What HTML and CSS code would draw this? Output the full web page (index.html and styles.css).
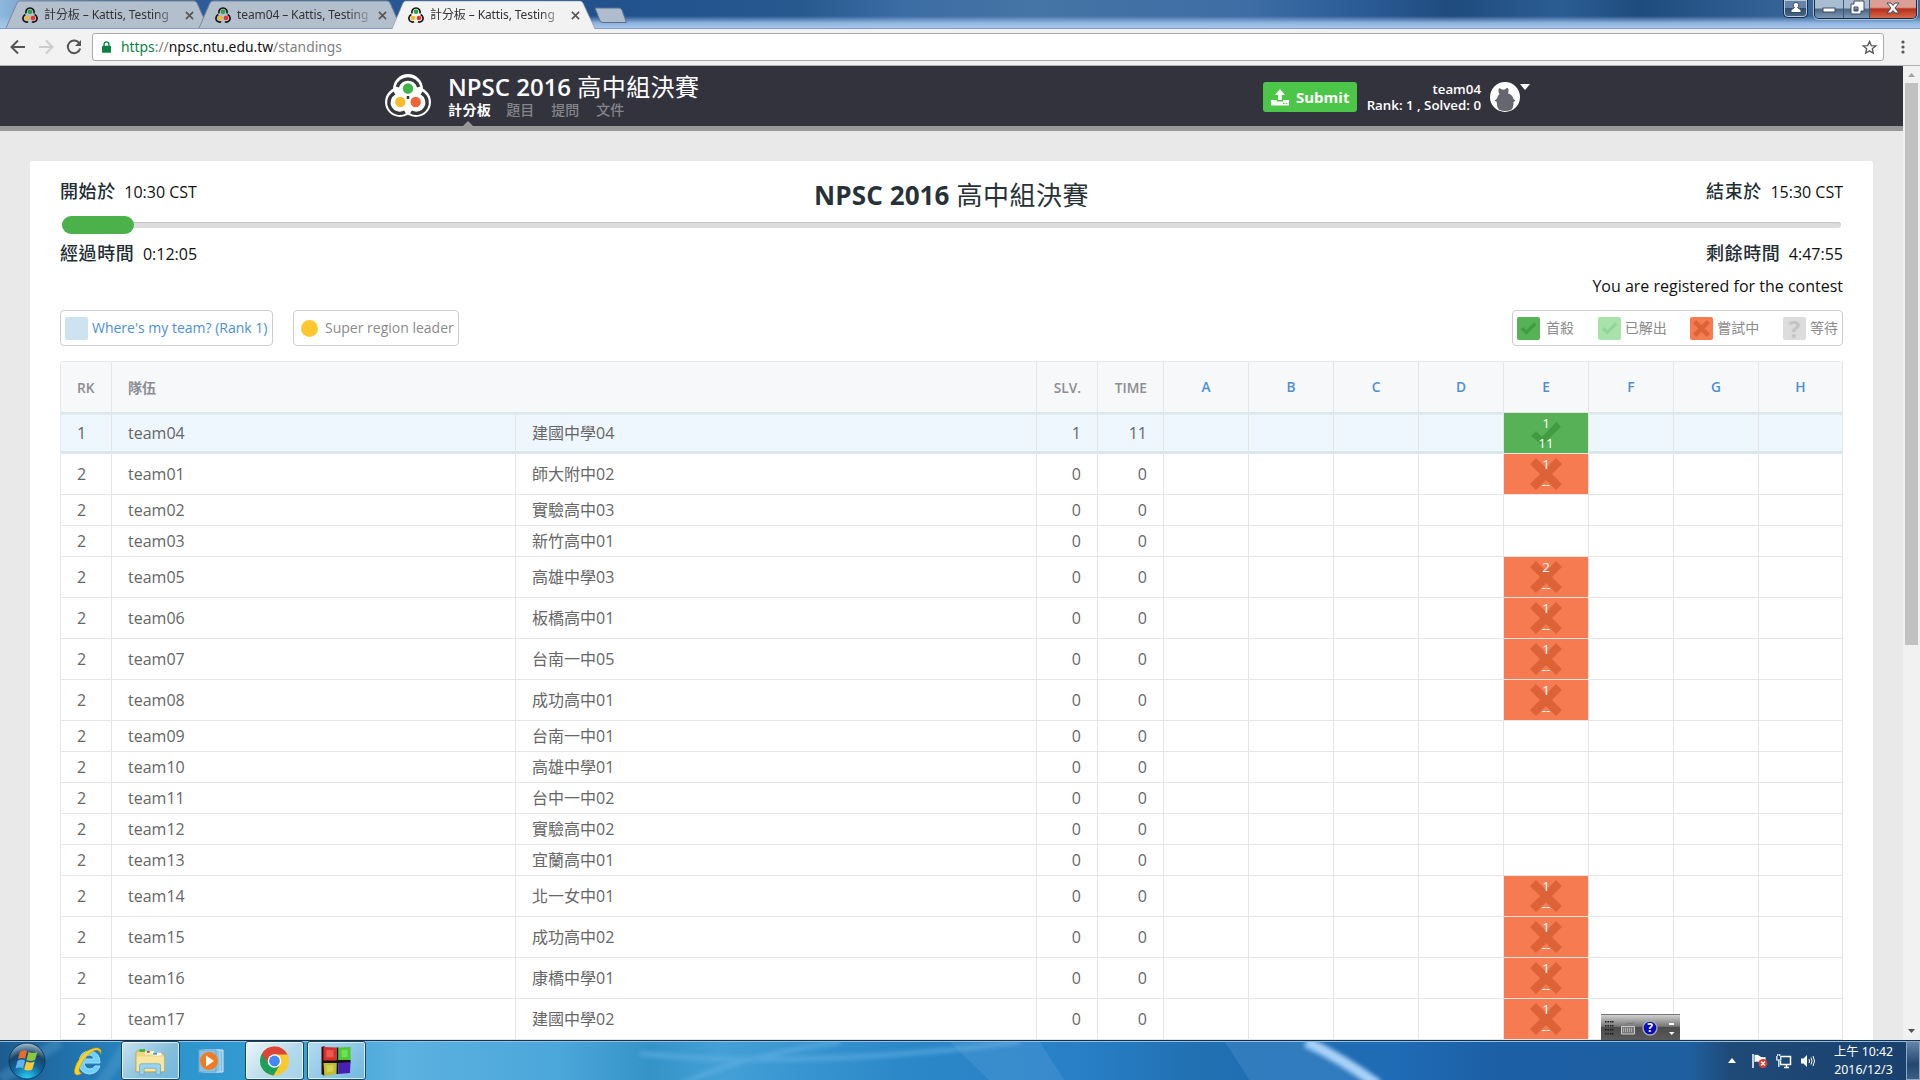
FILE: index.html
```html
<!DOCTYPE html>
<html lang="zh-Hant">
<head>
<meta charset="utf-8">
<title>計分板 – Kattis, Testing</title>
<link rel="stylesheet" href="styles.css">
</head>
<body>
<svg class="defs" width="0" height="0">
  <symbol id="kattis" viewBox="0 0 46 43">
    <g class="k-out"><circle cx="23" cy="15" r="15"/><circle cx="15" cy="28" r="15"/><circle cx="31" cy="28" r="15"/></g>
    <g class="k-arc" fill="none" stroke-width="3.4"><path d="M12.4 13A11 11 0 0 1 33.600 13"/><path d="M9.500 19A10.600 10.600 0 0 0 20 38"/><path d="M36.500 19A10.600 10.600 0 0 1 26 38"/><path d="M23 22v3" stroke-width="2.500"/></g>
    <circle cx="23" cy="14.500" r="5.200" fill="#3fb449"/><circle cx="15.300" cy="28" r="5.200" fill="#f7bb2b"/><circle cx="30.700" cy="28" r="5.200" fill="#ee6538"/>
  </symbol>
  <symbol id="fav" viewBox="0 0 16 16">
    <g fill="none" stroke="#151515" stroke-width="1.700"><path d="M4 6.500a4.200 4.200 0 1 1 8 0"/><path d="M3.300 7.500C.5 9 .2 12.500 2.200 14.200c1 .8 2.500 1 4 .6"/><path d="M12.700 7.500c2.800 1.500 3.100 5 1.100 6.700-1 .8-2.500 1-4 .6"/></g>
    <circle cx="8" cy="4.800" r="2.300" fill="#27a83b"/><circle cx="5" cy="11" r="2.300" fill="#f7b928"/><circle cx="11" cy="11" r="2.300" fill="#e33"/>
  </symbol>
  <symbol id="tick" viewBox="0 0 32 24"><path d="M1 15l5-5 6 6L26.500 1 31 6 12 24z"/></symbol>
  <symbol id="cross" viewBox="0 0 32 32"><path d="M6 0l10 10L26 0l6 6-10 10 10 10-6 6-10-10L6 32l-6-6 10-10L0 6z"/></symbol>
</svg>

<div class="tabstrip">
  <div class="tab">
    <svg class="tab-bg" viewBox="0 0 203 28"><path d="M0 28L11 3Q12 1 14 1H188Q190 1 191 3L202 28"/></svg>
    <svg class="fav"><use href="#fav"/></svg><span class="tab-title">計分板 – Kattis, Testing</span><svg class="x" viewBox="0 0 10 10"><path d="M1 1l8 8M9 1l-8 8"/></svg>
  </div>
  <div class="tab">
    <svg class="tab-bg" viewBox="0 0 203 28"><path d="M0 28L11 3Q12 1 14 1H188Q190 1 191 3L202 28"/></svg>
    <svg class="fav"><use href="#fav"/></svg><span class="tab-title">team04 – Kattis, Testing</span><svg class="x" viewBox="0 0 10 10"><path d="M1 1l8 8M9 1l-8 8"/></svg>
  </div>
  <div class="tab active">
    <svg class="tab-bg" viewBox="0 0 203 28"><path d="M0 29L11 3Q12 1 14 1H188Q190 1 191 3L203 29"/></svg>
    <svg class="fav"><use href="#fav"/></svg><span class="tab-title">計分板 – Kattis, Testing</span><svg class="x" viewBox="0 0 10 10"><path d="M1 1l8 8M9 1l-8 8"/></svg>
  </div>
  <svg class="newtab" viewBox="0 0 34 17"><path d="M1 1H25Q27 1 28 3L32.500 15.500H9Q7 15.500 6 14z"/></svg>
  <div class="winbtns">
    <div class="wb user"><svg viewBox="0 0 20 16"><path d="M10 2.500a2.700 2.700 0 0 1 1.500 5L15 10v2.500H5V10l3.500-2.500A2.700 2.700 0 0 1 10 2.500z"/></svg></div>
    <div class="wgroup">
      <div class="wb"><svg viewBox="0 0 20 16"><rect x="4" y="8" width="12" height="4"/></svg></div>
      <div class="wb"><svg viewBox="0 0 20 16"><path fill-rule="evenodd" d="M7 1h10v10h-3v3H4V4h3zM7 7v4h4V7z"/></svg></div>
      <div class="wb close"><svg viewBox="0 0 20 16"><path d="M4 3h4l2 2.500L12 3h4l-4 5 4 5h-4l-2-2.500L8 13H4l4-5z"/></svg></div>
    </div>
  </div>
</div>

<div class="toolbar">
  <svg class="nav" viewBox="0 0 16 16"><path d="M15 8H2M8 1.500L1.500 8 8 14.500"/></svg>
  <svg class="nav off" viewBox="0 0 16 16"><path d="M1 8h13M8 1.500L14.500 8 8 14.500"/></svg>
  <svg class="nav" viewBox="0 0 16 16"><path d="M13.500 4.500A6.300 6.300 0 1 0 14.200 9.500"/><path d="M15 1v6H9z" class="solid"/></svg>
  <div class="omni">
    <svg class="lock" viewBox="0 0 10 13"><path d="M1 5h8q1 0 1 1v6q0 1-1 1H1q-1 0-1-1V6q0-1 1-1z"/><path d="M2.300 6V3.300a2.700 2.500 0 0 1 5.400 0V6" fill="none" stroke="#0b8043" stroke-width="1.500"/></svg>
    <span class="url"><span class="sec">https</span><span class="dim">://</span>npsc.ntu.edu.tw<span class="dim">/standings</span></span>
    <svg class="star" viewBox="0 0 16 16"><path d="M8 1.500l1.900 4.400 4.700.4-3.600 3.100 1.100 4.700L8 11.600l-4.100 2.500L5 9.400 1.400 6.300l4.700-.4z"/></svg>
  </div>
  <svg class="dots" viewBox="0 0 4 14"><circle cx="2" cy="2" r="1.600"/><circle cx="2" cy="7" r="1.600"/><circle cx="2" cy="12" r="1.600"/></svg>
</div>

<div class="viewport">
  <div class="page">
    <header class="head">
      <svg class="logo"><use href="#kattis"/></svg>
      <div class="brand">
        <div class="contest">NPSC 2016 <span class="zh">高中組決賽</span></div>
        <nav class="menu"><a class="on">計分板</a><a>題目</a><a>提問</a><a>文件</a></nav>
      </div>
      <div class="submit"><svg viewBox="0 0 18 17"><path d="M9 0l5 6h-3.200v5H7.200V6H4z"/><path fill-rule="evenodd" d="M0 11h5.800v1.500h6.400V11H18v5.500H0zM12 14v1h1.500v-1zM14.800 14v1h1.500v-1z"/></svg>Submit</div>
      <div class="who"><div>team04</div><div>Rank: 1 , Solved: 0</div></div>
      <svg class="avatar" viewBox="0 0 30 30"><circle cx="15" cy="15" r="15" fill="#fff"/><path fill="#66666f" d="M8.500 7.500Q9 5.500 11 7Q13.500 8.500 15.500 7Q18 5 18.500 7.500Q18.800 10 18 11.500Q22 12 23.500 17L25.500 18.500 23.500 20Q24 25 21 28Q15 30 9.500 28Q6.500 25 6.800 20L4.800 18.500 7 16.500Q7.500 13.500 9.500 12Q8 10 8.500 7.500z"/></svg>
      <svg class="caret" viewBox="0 0 10 6"><path d="M0 0h10L5 6z"/></svg>
    </header>

    <main class="card">
      <section class="clock">
        <div class="line"><span><b>開始於</b>10:30 CST</span><h1>NPSC 2016 <span class="zh">高中組決賽</span></h1><span class="r"><b>結束於</b>15:30 CST</span></div>
        <div class="track"><div class="fill"></div></div>
        <div class="line second"><span><b>經過時間</b>0:12:05</span><span class="r"><b>剩餘時間</b>4:47:55</span></div>
        <div class="reg">You are registered for the contest</div>
      </section>
      <section class="legends">
        <div class="legend mine"><i class="sw"></i>Where's my team? (Rank 1)</div>
        <div class="legend lead"><i class="dot"></i>Super region leader</div>
        <div class="legend states">
          <span><i class="sw first"><svg><use href="#tick"/></svg></i>首殺</span>
          <span><i class="sw solved"><svg><use href="#tick"/></svg></i>已解出</span>
          <span><i class="sw tried"><svg><use href="#cross"/></svg></i>嘗試中</span>
          <span><i class="sw wait">?</i>等待</span>
        </div>
      </section>
      <table class="board">
        <colgroup><col class="c-rk"><col class="c-team"><col class="c-name"><col class="c-slv"><col class="c-time"><col class="c-p"><col class="c-p"><col class="c-p"><col class="c-p"><col class="c-p"><col class="c-p"><col class="c-p"><col class="c-last"></colgroup>
        <thead><tr><th>RK</th><th colspan="2" class="zt">隊伍</th><th class="n">SLV.</th><th class="n">TIME</th><th class="p">A</th><th class="p">B</th><th class="p">C</th><th class="p">D</th><th class="p">E</th><th class="p">F</th><th class="p">G</th><th class="p">H</th></tr></thead>
        <tbody>
          <tr class="tall me"><td>1</td><td>team04</td><td>建國中學04</td><td class="n">1</td><td class="n">11</td><td></td><td></td><td></td><td></td><td class="ok"><div class="res"><svg><use href="#tick"/></svg><span>1</span><span>11</span></div></td><td></td><td></td><td></td></tr>
          <tr class="tall"><td>2</td><td>team01</td><td>師大附中02</td><td class="n">0</td><td class="n">0</td><td></td><td></td><td></td><td></td><td class="bad"><div class="res"><svg><use href="#cross"/></svg><span>1</span><span>--</span></div></td><td></td><td></td><td></td></tr>
          <tr><td>2</td><td>team02</td><td>實驗高中03</td><td class="n">0</td><td class="n">0</td><td></td><td></td><td></td><td></td><td></td><td></td><td></td><td></td></tr>
          <tr><td>2</td><td>team03</td><td>新竹高中01</td><td class="n">0</td><td class="n">0</td><td></td><td></td><td></td><td></td><td></td><td></td><td></td><td></td></tr>
          <tr class="tall"><td>2</td><td>team05</td><td>高雄中學03</td><td class="n">0</td><td class="n">0</td><td></td><td></td><td></td><td></td><td class="bad"><div class="res"><svg><use href="#cross"/></svg><span>2</span><span>--</span></div></td><td></td><td></td><td></td></tr>
          <tr class="tall"><td>2</td><td>team06</td><td>板橋高中01</td><td class="n">0</td><td class="n">0</td><td></td><td></td><td></td><td></td><td class="bad"><div class="res"><svg><use href="#cross"/></svg><span>1</span><span>--</span></div></td><td></td><td></td><td></td></tr>
          <tr class="tall"><td>2</td><td>team07</td><td>台南一中05</td><td class="n">0</td><td class="n">0</td><td></td><td></td><td></td><td></td><td class="bad"><div class="res"><svg><use href="#cross"/></svg><span>1</span><span>--</span></div></td><td></td><td></td><td></td></tr>
          <tr class="tall"><td>2</td><td>team08</td><td>成功高中01</td><td class="n">0</td><td class="n">0</td><td></td><td></td><td></td><td></td><td class="bad"><div class="res"><svg><use href="#cross"/></svg><span>1</span><span>--</span></div></td><td></td><td></td><td></td></tr>
          <tr><td>2</td><td>team09</td><td>台南一中01</td><td class="n">0</td><td class="n">0</td><td></td><td></td><td></td><td></td><td></td><td></td><td></td><td></td></tr>
          <tr><td>2</td><td>team10</td><td>高雄中學01</td><td class="n">0</td><td class="n">0</td><td></td><td></td><td></td><td></td><td></td><td></td><td></td><td></td></tr>
          <tr><td>2</td><td>team11</td><td>台中一中02</td><td class="n">0</td><td class="n">0</td><td></td><td></td><td></td><td></td><td></td><td></td><td></td><td></td></tr>
          <tr><td>2</td><td>team12</td><td>實驗高中02</td><td class="n">0</td><td class="n">0</td><td></td><td></td><td></td><td></td><td></td><td></td><td></td><td></td></tr>
          <tr><td>2</td><td>team13</td><td>宜蘭高中01</td><td class="n">0</td><td class="n">0</td><td></td><td></td><td></td><td></td><td></td><td></td><td></td><td></td></tr>
          <tr class="tall"><td>2</td><td>team14</td><td>北一女中01</td><td class="n">0</td><td class="n">0</td><td></td><td></td><td></td><td></td><td class="bad"><div class="res"><svg><use href="#cross"/></svg><span>1</span><span>--</span></div></td><td></td><td></td><td></td></tr>
          <tr class="tall"><td>2</td><td>team15</td><td>成功高中02</td><td class="n">0</td><td class="n">0</td><td></td><td></td><td></td><td></td><td class="bad"><div class="res"><svg><use href="#cross"/></svg><span>1</span><span>--</span></div></td><td></td><td></td><td></td></tr>
          <tr class="tall"><td>2</td><td>team16</td><td>康橋中學01</td><td class="n">0</td><td class="n">0</td><td></td><td></td><td></td><td></td><td class="bad"><div class="res"><svg><use href="#cross"/></svg><span>1</span><span>--</span></div></td><td></td><td></td><td></td></tr>
          <tr class="tall"><td>2</td><td>team17</td><td>建國中學02</td><td class="n">0</td><td class="n">0</td><td></td><td></td><td></td><td></td><td class="bad"><div class="res"><svg><use href="#cross"/></svg><span>1</span><span>--</span></div></td><td></td><td></td><td></td></tr>
        </tbody>
      </table>
    </main>
  </div>
  <div class="scroll">
    <svg viewBox="0 0 17 17"><path d="M5 11h7L8.500 7z" fill="#a3a3a3"/></svg>
    <div class="thumb"></div>
    <svg class="down" viewBox="0 0 17 17"><path d="M5 6h7l-3.500 4z" fill="#505050"/></svg>
  </div>
  <div class="ime">
    <svg viewBox="0 0 79 26">
      <g fill="#1c1c1c"><path d="M4 6h1.500v1.500H4zM6.500 6H8v1.500H6.500zM9 6h1.500v1.500H9zM11 6h1.500v1.500H11zM4 10h1.500v1.500H4zM6.500 10H8v1.500H6.500zM9 10h1.500v1.500H9zM11 10h1.500v1.500H11zM4 14h1.500v1.500H4zM6.500 14H8v1.500H6.500zM9 14h1.500v1.500H9zM11 14h1.500v1.500H11zM4 18h1.500v1.500H4zM6.500 18H8v1.500H6.500zM9 18h1.500v1.500H9zM11 18h1.500v1.500H11z"/></g>
      <path d="M20.500 11.500h13v7.500h-13z" fill="#777" stroke="#ccc"/><path d="M22 14h10M22 16h10" stroke="#ddd" stroke-dasharray="1 1"/><path d="M24 11q1-3 5-2.500T33 7" fill="none" stroke="#777"/>
      <circle cx="49" cy="13" r="7" fill="#0a0ac0" stroke="#aaa" stroke-width="1.400"/>
      <path d="M68 8h5v2h-5zM68 17h5.500L70.700 20z" fill="#fff"/>
    </svg><span class="q">?</span>
  </div>
</div>

<div class="taskbar">
  <svg class="streaks" viewBox="0 0 1920 40" preserveAspectRatio="none"><defs><filter id="soft"><feGaussianBlur stdDeviation="2"/></filter></defs><g fill="none" filter="url(#soft)"><path d="M1306 0Q1340 16 1378 44" stroke="#a9d1f8" stroke-width="11"/><path d="M680 44Q740 14 840 0M640 12Q800 28 1020 0" stroke="#62b3e4" stroke-width="5" opacity=".6"/><path d="M0 38L60 0M100 44L130 0" stroke="#5aa3d2" stroke-width="12" opacity=".35"/></g><path d="M950 0h90l25 40H990zM1225 0h80l60 40H1250z" fill="#7ab4e6" opacity=".2"/></svg>
  <div class="start"><svg viewBox="0 0 38 38"><defs><radialGradient id="orb" cx=".5" cy="1" r="1"><stop offset="0" stop-color="#29d5fb"/><stop offset=".45" stop-color="#10639a"/><stop offset=".7" stop-color="#174467"/><stop offset="1" stop-color="#aac1d1"/></radialGradient></defs><circle cx="19" cy="19" r="18" fill="url(#orb)" stroke="#0c3b5e"/><path d="M12 10q4-3 7-1l-2 8q-3-2-7 0z" fill="#ee6a2c"/><path d="M20.500 10q4 2 9 0l-2.500 8q-4 2-8.500 0z" fill="#8cc63e"/><path d="M9.500 19q4-2.500 7.500-.5l-2 8q-3.500-2-7.500 0z" fill="#5fb5ea"/><path d="M18.200 19.500q4 2 8.500 0l-2.500 8q-4 2-8 0z" fill="#fcc735"/></svg></div>
  <svg class="ie" viewBox="0 0 32 32"><path d="M27 18H11q1 6 6 6 3.500 0 5-3h5Q24 29 16 29 6 28 6 17 7 6 17 6q10 1 10 12zM11.500 14H21q-.5-4-4.500-4t-5 4z" fill="#6fd0fb" stroke="#9fe0fc" stroke-width="1"/><path d="M28 9q1-7-6-6Q11 5 4 18-1 29 4 30q2 0 5-2-4 .5-2.500-5Q10 12 20 6q6-3 8 3z" fill="#fbd31e" stroke="#d79b12" stroke-width=".5"/></svg>
  <div class="tb"><svg viewBox="0 0 34 30"><path d="M2 4h10l2 3h18v20H1V6z" fill="#efd684" stroke="#b8983c" stroke-width=".8"/><path d="M5 2h6v3H5z" fill="#3eb23c"/><path d="M11 4h10v4H11z" fill="#fff7c8"/><path d="M13 4h3v2h-3z" fill="#d33"/><path d="M20 6h9v3h-9z" fill="#fff"/><path d="M20 6h4v2h-4z" fill="#2b8de0"/><path d="M2 10h30v16H2z" fill="#f6e6a0"/><path d="M5 30V20q0-2 2-2h19q2 0 2 2v10h-5v-7H10v7z" fill="#9bd3ef" stroke="#5b9fc4" stroke-width=".7"/></svg></div>
  <svg class="media" viewBox="0 0 28 26"><path d="M7 2h18v22H7z" fill="#83bfe2" stroke="#d6ecf8"/><path d="M4 2h18v22H4z" fill="#86c4e8" stroke="#b9def2"/><path d="M1 2h17v22H1z" fill="#8cc0e2" stroke="#6aa9d2"/><circle cx="11" cy="13" r="9" fill="#f47a20"/><path d="M8 7.500l8 5.500-8 5.500z" fill="#fff"/></svg>
  <div class="tb bright"><svg viewBox="0 0 30 30"><circle cx="15" cy="15" r="14.500" fill="#fbc92e"/><path d="M15 15L2.400 7.800A14.500 14.500 0 0 0 14 29.400L21 18z" fill="#1da05a"/><path d="M2.400 7.800A14.500 14.500 0 0 1 28 8.500H15L9 18z" fill="#dc4437"/><circle cx="15" cy="15" r="6.800" fill="#fff"/><circle cx="15" cy="15" r="5.400" fill="#4688f1"/></svg></div>
  <div class="tb last"><svg viewBox="0 0 30 30"><path d="M0 1l3-1v30l-3-2z" fill="#2a1010"/><path d="M15 1.500h2V28h-2zM2 14h27v3H2z" fill="#111"/><path d="M2 1l13 .5v13H2z" fill="#d8302b"/><path d="M5 4l7 .3v7H5z" fill="#ea5a50"/><path d="M17 1.500L29 1v13H17z" fill="#4fc834"/><path d="M20 4l6-.3v7.500h-6z" fill="#72e055"/><path d="M2 17h13l-.5 11L3 30z" fill="#c1bd2f"/><path d="M5 19h7l-.5 6.500-6 1z" fill="#d3d054"/><path d="M17 17l12-1-.5 11-11.500 1z" fill="#4a20b4"/></svg></div>
  <div class="tray">
    <svg class="up" viewBox="0 0 8 5"><path d="M0 5h8L4 0z" fill="#fff"/></svg>
    <svg class="t1" viewBox="0 0 16 16"><path d="M1 1v14" stroke="#fff" stroke-width="1.500"/><path d="M2.500 2q3-1 5 1t6 1v6q-4 1-6-.5T2.500 9z" fill="#fff"/><circle cx="11" cy="10.500" r="4.500" fill="#e03a2c"/><path d="M9 8.500l4 4M13 8.500l-4 4" stroke="#fff" stroke-width="1.400"/></svg>
    <svg class="t2" viewBox="0 0 16 16"><path d="M5 3.500h9.500v8H4.500V8M8 14.500h5M10.500 12v2" fill="none" stroke="#fff" stroke-width="1.500"/><path d="M.8 3v4h4V3M1.800 1v2M3.800 1v2M2.800 7v7" fill="none" stroke="#fff" stroke-width="1.200"/></svg>
    <svg class="t3" viewBox="0 0 16 16"><path d="M1 5.500h2.500L7 2v12l-3.500-3.500H1z" fill="#fff"/><path d="M9 6q1 2 0 4M11 4.500q2 3.500 0 7M13 3q3 5 0 10" fill="none" stroke="#fff"/></svg>
    <div class="time"><div>上午 10:42</div><div>2016/12/3</div></div>
    <div class="peek"></div>
  </div>
</div>
</body>
</html>
```
FILE: styles.css
```css
* { box-sizing: border-box; }
html, body { margin: 0; height: 100%; }
body { width: 1920px; height: 1080px; overflow: hidden; display: flex; flex-direction: column; font-family: "Open Sans", "Noto Sans CJK TC", sans-serif; font-size: 16px; }
svg { display: block; flex: none; }
.defs { position: absolute; }

/* browser chrome */
.tabstrip { height: 29px; flex: none; display: flex; padding-left: 6px; position: relative; border-bottom: 1px solid #7f9ccb;
  background: linear-gradient(180deg, transparent 16px, rgba(160,195,235,.85) 23px, #a8c6ec 28px), linear-gradient(90deg, #8fb8dd 0, #2f609b 110px, #22518d 600px, #27598f 800px, #3b6ca3 900px, #4574a6 1030px, #3d6da4 1250px, #2a5a94 1370px, #1f4b7e 1450px, #2b5d93 1560px, #1f4c7f 1640px, #38659a 1800px, #3c6b9d 1920px); }
.tab { width: 203px; margin-right: -10px; height: 28px; position: relative; display: flex; align-items: center; padding-left: 16px; }
.tab-bg { position: absolute; left: 0; top: 0; width: 203px; height: 28px; overflow: visible; fill: #b3bfcd; stroke: #78889c; }
.tab.active { z-index: 2; }
.active .tab-bg { fill: #f2f2f2; stroke: #8494a8; }
.active .tab-bg path { stroke-width: .6; }
.fav { width: 16px; height: 16px; position: relative; top: 1px; }
.tab-title { position: relative; top: 1px; margin-left: 6px; width: 134px; height: 20px; font: 12px/20px "Noto Sans", "Noto Sans CJK TC", sans-serif; color: #333; white-space: nowrap; letter-spacing: -.1px; -webkit-mask-image: linear-gradient(90deg, #000 110px, rgba(0,0,0,.3) 130px); mask-image: linear-gradient(90deg, #000 110px, rgba(0,0,0,.3) 130px); }
.x { position: relative; top: 1px; width: 9px; height: 9px; margin-left: 7px; stroke: #555; stroke-width: 1.800; }
.newtab { position: relative; width: 34px; height: 17px; margin: 7px 0 0 9px; fill: #aebccd; stroke: #56708f; }
.winbtns { margin-left: auto; display: flex; gap: 6px; padding-right: 3px; }
.wb { height: 18px; width: 28px; display: flex; justify-content: center; background: linear-gradient(#a9bdd2 0 45%, #4b6684 50%, #7e9ab8); }
.wb svg { width: 20px; height: 16px; fill: #fff; stroke: #3c4a5c; stroke-width: 1; }
.user { width: 25px; border: 1px solid #1a2d44; border-top: 0; border-radius: 0 0 5px 5px; box-shadow: inset 0 0 0 1px #b7c8db; background: linear-gradient(#6484a8 0 45%, #2f506f 50%, #466785); }
.wgroup { display: flex; height: 19px; border: 1px solid #1a2d44; border-top: 0; border-radius: 0 0 5px 5px; overflow: hidden; box-shadow: 0 0 0 1px #a9bed5; }
.wgroup .wb + .wb { border-left: 1px solid #3e5775; width: 26px; }
.wgroup .wb + .wb.close { width: 47px; background: linear-gradient(#dba095 0 40%, #b62e18 50%, #d4684a); }

.toolbar { height: 37px; flex: none; background: #f2f2f2; border-bottom: 1px solid #b0b0b0; display: flex; align-items: center; padding: 0 15px 0 10px; }
.nav { width: 16px; height: 16px; margin-right: 12px; fill: none; stroke: #555; stroke-width: 2; }
.nav.off { stroke: #ccc; }
.nav .solid { fill: #555; stroke: none; }
.omni { flex: 1; height: 28px; margin: 0 17px 0 -2px; background: #fff; border: 1px solid #a8a8a8; border-radius: 3px; display: flex; align-items: center; padding: 0 6px 0 9px; }
.lock { width: 9px; height: 12px; fill: #0b8043; margin-right: 10px; }
.url { font: 13.850px/20px "Noto Sans", sans-serif; color: #111; margin-top: -1px; }
.sec { color: #0b8043; }
.dim { color: #808080; }
.star { width: 15px; height: 15px; margin-left: auto; fill: none; stroke: #555; stroke-width: 1.400; }
.dots { width: 4px; height: 14px; fill: #555; }

/* page */
.viewport { flex: none; height: 974px; display: flex; position: relative; overflow: hidden; }
.page { width: 1903px; background: #e9e9e9; height: 974px; overflow: hidden; }
.head { height: 65px; background: #33333d; border-bottom: 5px solid #999; display: flex; padding-left: 385px; color: #fff; }
.logo { width: 46px; height: 43px; margin-top: 8px; }
.k-out { fill: #fff; }
.k-arc { stroke: #33383c; }
.brand { margin-left: 17px; width: 815px; }
.contest { height: 32px; margin-top: 5px; font-size: 24px; line-height: 32px; font-weight: 600; white-space: nowrap; }
.zh { font-weight: 400; }
.contest .zh { letter-spacing: .4px; }
.menu { display: flex; height: 22px; margin-top: -4px; font-size: 14px; line-height: 22px; color: #85858b; }
.menu a { margin-right: 17px; position: relative; font-weight: 500; }
.menu .on { color: #fff; font-weight: 700; letter-spacing: .4px; margin-right: 15px; }
.menu .on::after { content: ""; position: absolute; left: 15px; top: 22px; border: 5px solid transparent; border-top: 0; border-bottom-color: #999; }
.submit { width: 94px; height: 30px; margin-top: 16px; border-radius: 3px; background: #4bc648; display: flex; align-items: center; padding-left: 8px; font-size: 15px; font-weight: 700; }
.submit svg { width: 18px; height: 17px; fill: #fff; margin-right: 7px; }
.who { width: 124px; text-align: right; margin-top: 15px; font-size: 13.300px; line-height: 16px; font-weight: 600; white-space: nowrap; }
.avatar { width: 30px; height: 30px; margin: 16px 0 0 9px; }
.caret { width: 10px; height: 6px; margin-top: 18px; fill: #fff; }

.card { margin: 30px 30px 0; height: 900px; background: #fff; border-radius: 3px; padding: 16px 30px 0; color: #111; }
.line { height: 28px; display: flex; justify-content: space-between; line-height: 28px; white-space: nowrap; }
.line > span { width: 300px; }
.line > .r { text-align: right; }
.line b { font-size: 18px; font-weight: 500; letter-spacing: .6px; margin-right: 8.500px; color: #222e33; }
h1 { margin: 3px 0 0; font-size: 26px; line-height: 30px; font-weight: 700; color: #263238; letter-spacing: .1px; }
h1 .zh { letter-spacing: .5px; }
.track { height: 6px; margin: 17px 2px 0; background: #dcdcdc; border-radius: 3px; box-shadow: inset 0 1px 1px #c4c4c4; display: flex; align-items: center; }
.fill { flex: none; width: 72px; height: 18px; border-radius: 9px; background: #4cb04b; }
.second { margin-top: 11px; }
.reg { text-align: right; line-height: 24px; margin-top: 7px; }
.legends { display: flex; margin-top: 12px; font-size: 14px; line-height: 20px; color: #8a8a8a; }
.legend { height: 36px; border: 1px solid #ccc; border-radius: 4px; display: flex; align-items: center; white-space: nowrap; }
.mine { width: 213px; padding-left: 4px; color: #4d90d2; margin-right: 20px; }
.lead { width: 166px; padding-left: 7px; }
.sw { width: 23px; height: 23px; border-radius: 2px; background: #cde4f0; margin-right: 4px; display: flex; align-items: center; justify-content: center; flex: none; font-style: normal; }
.dot { width: 17px; height: 17px; border-radius: 50%; background: #fdc82f; margin-right: 7px; }
.states { margin-left: auto; width: 331px; padding: 0 4px; justify-content: space-between; }
.states span { display: flex; align-items: center; }
.sw svg { width: 17px; height: 14px; }
.first { background: #57b157; fill: #429b42; margin-right: 6px; }
.solved { background: #a9e3ab; fill: #94d597; }
.tried { background: #f77b51; fill: #dd6238; }
.tried svg { height: 17px; }
.wait { background: #dcdcdc; color: #c4c4c4; font-size: 24px; font-weight: 700; line-height: 23px; }

.board { table-layout: fixed; width: 1783px; margin-top: 15px; border-collapse: separate; border-spacing: 0; border-left: 1px solid #e5e7e8; border-top: 1px solid #e5e7e8; border-radius: 4px 4px 0 0; color: #666; }
.c-rk { width: 51px; } .c-team { width: 404px; } .c-name { width: 521px; } .c-slv { width: 61px; } .c-time { width: 66px; } .c-p { width: 85px; } .c-last { width: 84px; }
.board th { height: 51px; padding: 1px 16px 0; background: #f6f8fa; text-align: left; font-size: 13.700px; font-weight: 600; line-height: 20px; color: #8b8d92; border-right: 1px solid #e4e6e8; border-bottom: 1px solid #e0e2e4; white-space: nowrap; }
.board .zt { font-size: 14px; }
.board .p { padding: 0; text-align: center; color: #4d90d2; }
.board td { height: 31px; padding: 0 16px; line-height: 24px; border-right: 1px solid #e5e5e5; border-bottom: 1px solid #e5e5e5; white-space: nowrap; }
.board .tall td { height: 41px; }
.board .n { text-align: right; }
.board .me td { background: #eef7fd; box-shadow: inset 0 2px #dcecf1, inset 0 -2px #d5e8ef; }
.board .me td.ok, .board td.bad { padding: 0; background: #57b157; box-shadow: none; }
.board td.bad { background: #f77b51; }
.res { position: relative; height: 40px; display: flex; flex-direction: column; align-items: center; font-size: 13.500px; line-height: 20px; color: #fff; }
.res svg { position: absolute; left: 26px; top: 4px; width: 32px; height: 32px; fill: #dd6238; }
.ok svg { fill: #429b42; top: 8px; height: 24px; }
.res span { position: relative; height: 20px; }

.scroll { width: 17px; background: #f1f1f1; display: flex; flex-direction: column; }
.scroll svg { width: 17px; height: 17px; }
.thumb { margin: 0 2px; height: 562px; background: #c1c1c1; }
.down { margin-top: auto; }
.ime { position: absolute; left: 1601px; top: 948px; width: 79px; height: 26px; border-top: 1px solid #777; background: linear-gradient(#d0d0d0, #777 45%, #4c4c4c 50%, #5a5a5a); }
.q { position: absolute; left: 45px; top: 3px; width: 8px; font: 700 12px/19px "Noto Sans", sans-serif; color: #fff; text-align: center; }

/* desktop taskbar */
.taskbar { flex: none; height: 40px; position: relative; border-top: 1px solid #17304c; box-shadow: inset 0 1px #8fc0e6; display: flex; align-items: center; overflow: hidden;
  background: linear-gradient(90deg, #1c5c90 0, #2378b3 90px, #2d95cd 180px, #379fd2 300px, #5cb2e0 400px, #4ba6da 560px, #3593c8 650px, #44a0d6 720px, #2c88c8 900px, #287fc6 1080px, #2070b2 1200px, #1f6bb5 1400px, #1c5fa5 1500px, #1f5f9f 1690px, #1f4a78 1730px, #19406d 1920px); }
.streaks { position: absolute; left: 0; top: 1px; width: 1920px; height: 39px; }
.taskbar > :not(.streaks) { position: relative; }
.start { margin-left: 8px; width: 38px; }
.start svg { width: 38px; height: 38px; }
.ie { width: 32px; height: 32px; margin: 0 16px 0 27px; }
.tb { width: 59px; height: 39px; border: 1px solid #174564; border-radius: 3px; box-shadow: inset 0 0 0 1px rgba(255,255,255,.7); background: linear-gradient(135deg, #c9e3f0, #85bedd 60%, #70b9df); display: flex; align-items: center; justify-content: center; }
.tb svg { width: 31px; height: 30px; }
.media { width: 28px; height: 26px; margin: 0 19px 0 18px; }
.bright { background: linear-gradient(135deg, #eef6fa, #b3d9ec 60%, #a5d3ea); }
.last { margin-left: 3px; background: linear-gradient(135deg, #b4dbf0, #6fb8df); }
.tray { margin-left: auto; display: flex; align-items: center; height: 39px; }
.up { width: 8px; height: 5px; margin-right: 16px; }
.t1, .t2, .t3 { width: 16px; height: 16px; margin-right: 8px; }
.time { width: 85px; text-align: center; font: 12.300px/18px "Noto Sans", "Noto Sans CJK TC", sans-serif; color: #fff; margin: 0 0 0 -3px; }
.peek { width: 14px; height: 39px; border: 1px solid #8fa9c5; background: linear-gradient(#6485a8, #24476f 60%, #3a5e86); }
```
